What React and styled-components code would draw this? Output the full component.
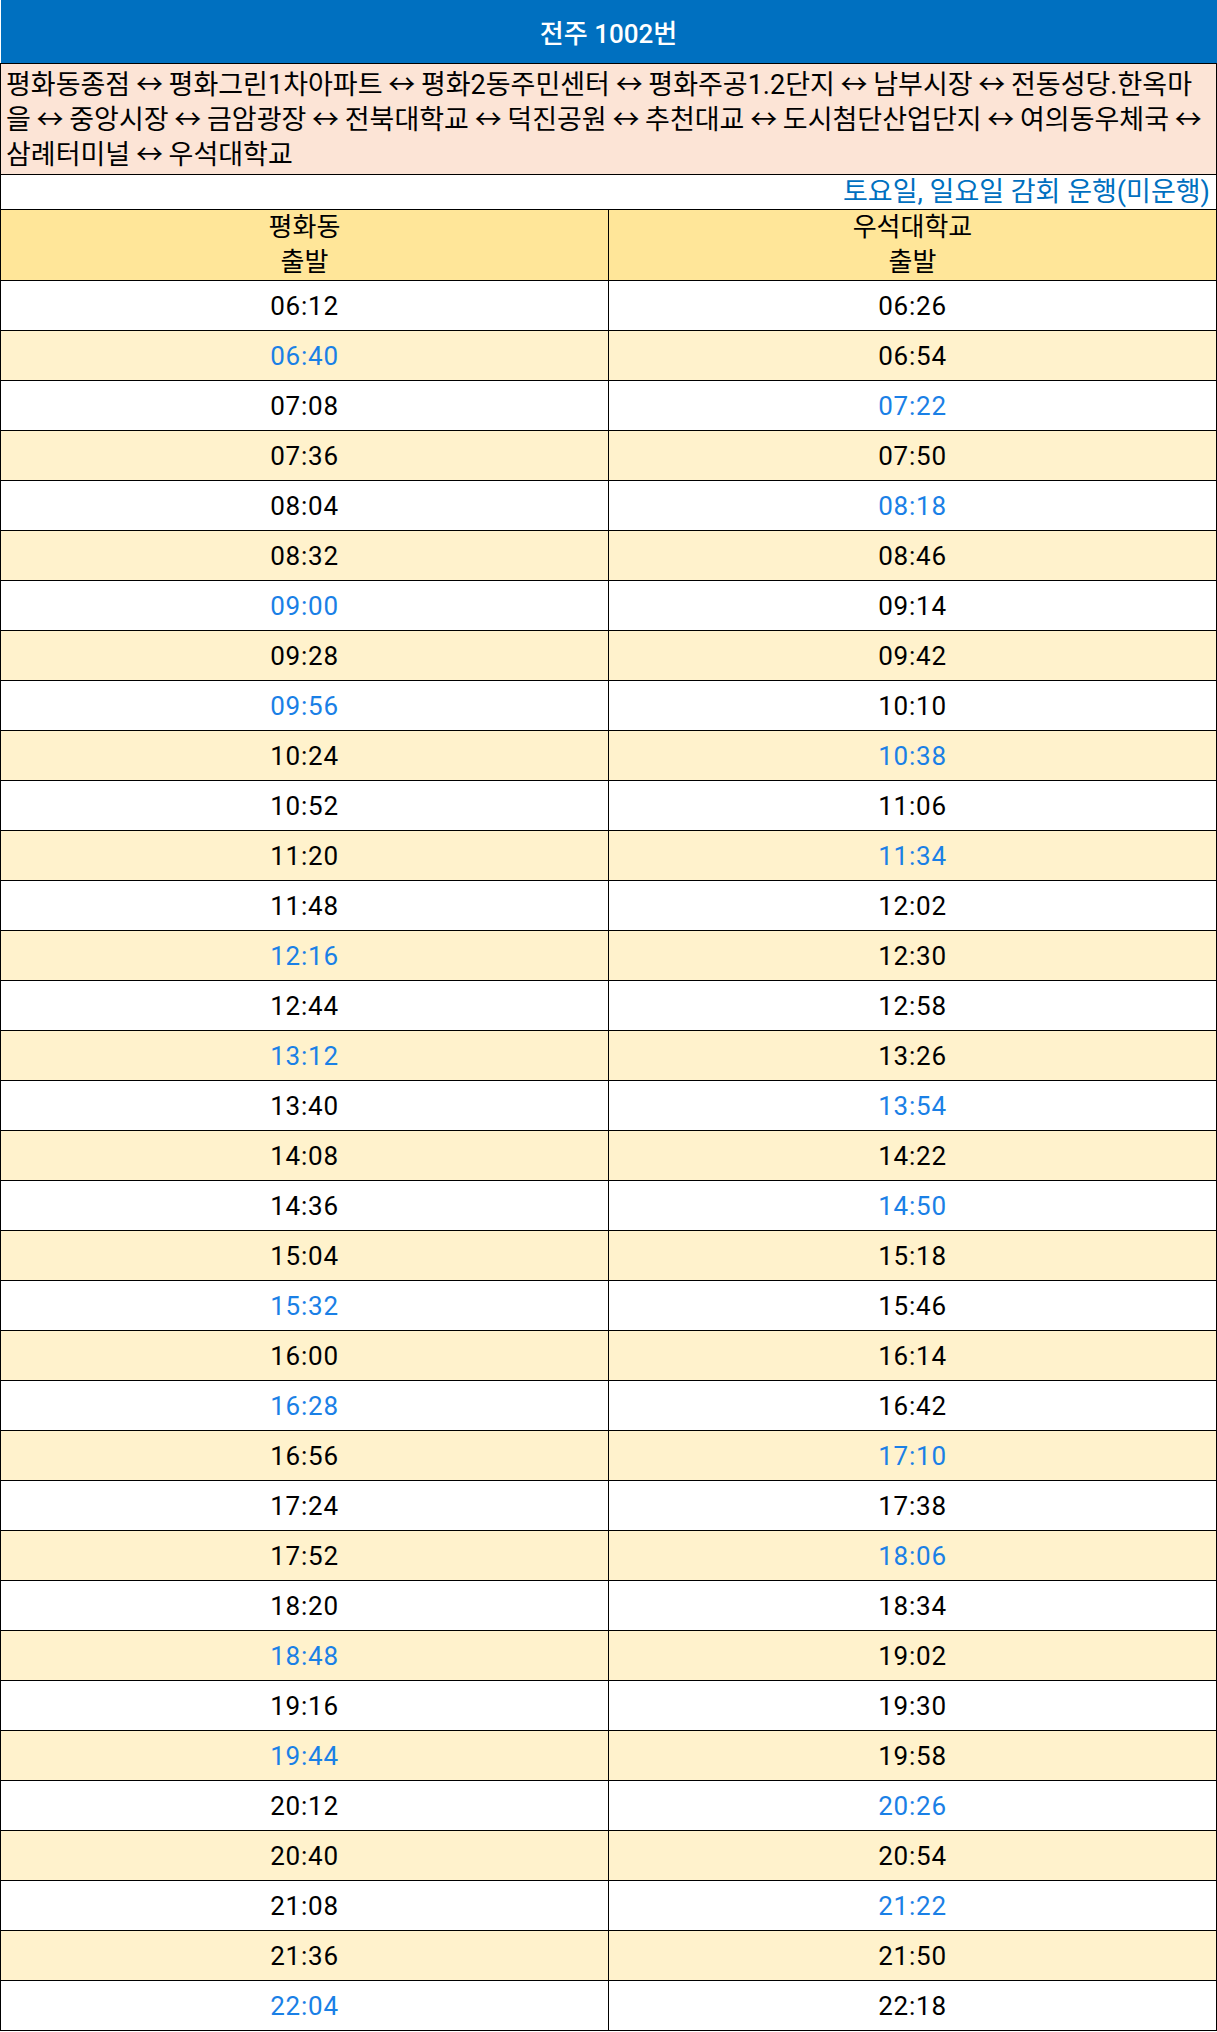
import React from "react"
import styled, { createGlobalStyle } from "styled-components"

const GlobalStyle = createGlobalStyle`
    html, body {
        margin: 0;
        padding: 0;
        background: #ffffff;
    }
    body {
        font-family: Roboto, "Noto Sans CJK KR", sans-serif;
        color: #000000;
    }
`

const Table = styled.table`
    width: 1217px;
    border-collapse: collapse;
    table-layout: fixed;
`

const TitleCell = styled.th`
    height: 63px;
    padding: 0;
    background: #0070c0;
    color: #ffffff;
    font-size: 26px;
    font-weight: 500;
    text-align: center;
    border-bottom: 1px solid #000000;
`

const RouteCell = styled.td`
    height: 111px;
    padding: 4px 4px 0 5px;
    box-sizing: border-box;
    background: #fce4d6;
    font-size: 27px;
    line-height: 35px;
    word-spacing: -1px;
    text-align: left;
    vertical-align: top;
    border: 1px solid #000000;
    overflow: hidden;
`

const RouteLine = styled.span`
    display: block;
    white-space: nowrap;
`

const NoticeCell = styled.td`
    height: 34px;
    padding: 0 6px 0 0;
    color: #0070c0;
    font-size: 27px;
    line-height: 34px;
    text-align: right;
    border: 1px solid #000000;
`

const HeadCell = styled.th`
    height: 70px;
    padding: 0;
    background: #ffe699;
    font-size: 26px;
    font-weight: 400;
    line-height: 35px;
    text-align: center;
    border: 1px solid #000000;
`

const TimeRow = styled.tr`
    background: ${({ $shaded }) => $shaded ? "#fff2cc" : "#ffffff"};
`

const TimeCell = styled.td`
    height: 49px;
    padding: 0;
    font-size: 26px;
    letter-spacing: 0.8px;
    text-align: center;
    color: ${({ $highlight }) => $highlight ? "#1a80e6" : "#000000"};
    border: 1px solid #000000;
`

//엑셀 원본의 줄바꿈 위치 그대로
const routeLines = [
    "평화동종점 ↔ 평화그린1차아파트 ↔ 평화2동주민센터 ↔ 평화주공1.2단지 ↔ 남부시장 ↔ 전동성당.한옥마",
    "을 ↔ 중앙시장 ↔ 금암광장 ↔ 전북대학교 ↔ 덕진공원 ↔ 추천대교 ↔ 도시첨단산업단지 ↔ 여의동우체국 ↔",
    "삼례터미널 ↔ 우석대학교",
]

const blueLeft = [ "06:40", "09:00", "09:56", "12:16", "13:12", "15:32", "16:28", "18:48", "19:44", "22:04" ]
const blueRight = [ "07:22", "08:18", "10:38", "11:34", "13:54", "14:50", "17:10", "18:06", "20:26", "21:22" ]

const fmt = min => {
    const h = String( Math.floor( min / 60 ) ).padStart( 2, "0" )
    const m = String( min % 60 ).padStart( 2, "0" )
    return `${h}:${m}`
}

//평화동 06:12 출발부터 28분 간격, 우석대학교는 14분 뒤
const rows = Array.from({ length: 35 }, ( _, i ) => {
    const start = 6 * 60 + 12 + i * 28
    return { left: fmt( start ), right: fmt( start + 14 ) }
})

const App = () => {
    return (
        <>
            <GlobalStyle />
            <Table>
                <colgroup>
                    <col style={{ width: "608px" }} />
                    <col />
                </colgroup>
                <thead>
                    <tr>
                        <TitleCell colSpan={ 2 }>전주 1002번</TitleCell>
                    </tr>
                    <tr>
                        <RouteCell colSpan={ 2 }>
                            { routeLines.map( line => <RouteLine key={ line }>{ line }</RouteLine> ) }
                        </RouteCell>
                    </tr>
                    <tr>
                        <NoticeCell colSpan={ 2 }>토요일, 일요일 감회 운행(미운행)</NoticeCell>
                    </tr>
                    <tr>
                        <HeadCell>평화동<br />출발</HeadCell>
                        <HeadCell>우석대학교<br />출발</HeadCell>
                    </tr>
                </thead>
                <tbody>
                    {
                        rows.map(( row, i ) => (
                            <TimeRow key={ row.left } $shaded={ i % 2 === 1 }>
                                <TimeCell $highlight={ blueLeft.includes( row.left ) }>{ row.left }</TimeCell>
                                <TimeCell $highlight={ blueRight.includes( row.right ) }>{ row.right }</TimeCell>
                            </TimeRow>
                        ))
                    }
                </tbody>
            </Table>
        </>
    )
}

export default App
